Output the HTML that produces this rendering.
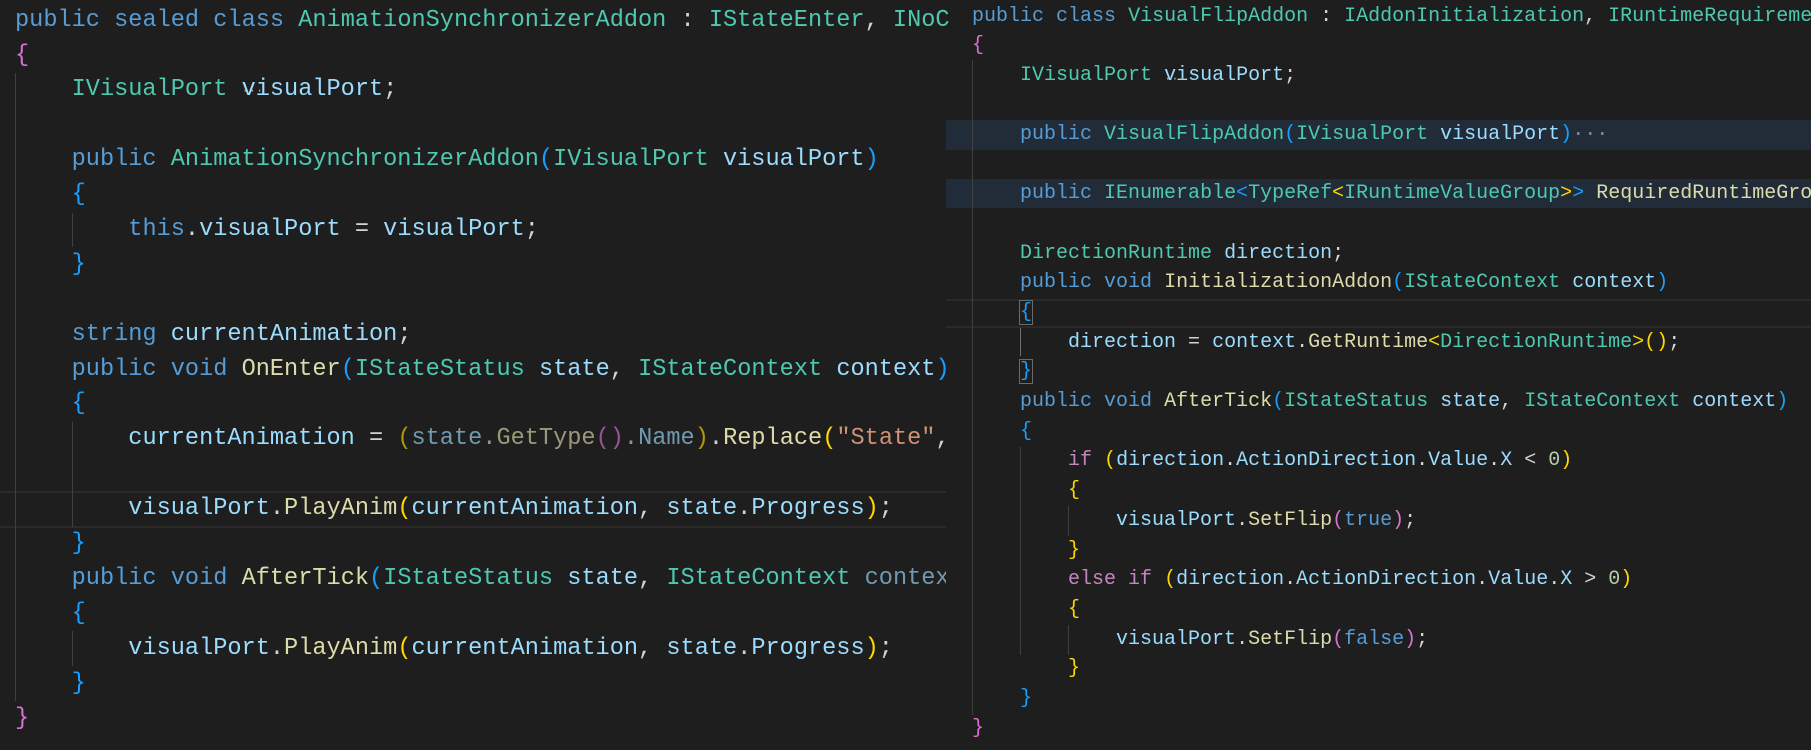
<!DOCTYPE html>
<html><head><meta charset="utf-8"><style>
html,body{margin:0;padding:0;background:#1e1e1e;width:1811px;height:750px;overflow:hidden}
.pane{position:absolute;top:0;height:750px;overflow:hidden;font-family:"Liberation Mono",monospace;color:#d4d4d4}
#L{left:0;width:946px;font-size:23.6px}
#L1{position:absolute;left:0;top:0;font-family:"Liberation Mono",monospace;color:#d4d4d4;font-size:23.6px}
#R{left:946px;width:865px;font-size:20px}
.ln{position:absolute;white-space:pre;left:0}
#L .ln,#L1 .ln{left:15px;height:35px;line-height:35px}
#R .ln{left:26px;height:30px;line-height:30px}
.k{color:#569cd6}.t{color:#4ec9b0}.v{color:#9cdcfe}.f{color:#dcdcaa}.s{color:#ce9178}
.p{color:#da70d6}.b{color:#179fff}.y{color:#ffd700}.c{color:#c586c0}.n{color:#b5cea8}
.dim{opacity:.65}
.g{position:absolute;width:1px;background:#404040}
.hl{position:absolute;background:#212c38}
.bx{outline:1px solid #6b6b6b}
.dots{position:relative}
.dots:after{content:"···";position:absolute;left:0;top:0.75em;font-size:12px;color:#aaa;line-height:12px}
.hr{position:absolute;height:2px;background:#2a2a2a}
</style></head><body>
<div id="L1"><div class="ln" style="top:3px"><span class="k">public</span> <span class="k">sealed</span> <span class="k">class</span> <span class="t">AnimationSynchronizerAddon</span> : <span class="t">IStateEnter</span>, <span class="t">INoC</span></div></div>
<div class="pane" id="L">
<div class="hr" style="left:0;width:946px;top:491px"></div>
<div class="hr" style="left:0;width:946px;top:526px"></div>
<div class="g" style="left:15px;top:73px;height:628px"></div>
<div class="g" style="left:72px;top:213px;height:34px"></div>
<div class="g" style="left:72px;top:422px;height:105px"></div>
<div class="g" style="left:72px;top:631px;height:35px"></div>
<div class="ln" style="top:38px"><span class="p">{</span></div>
<div class="ln" style="top:72px">    <span class="t">IVisualPort</span> <span class="v dots">visualPort</span>;</div>
<div class="ln" style="top:142px">    <span class="k">public</span> <span class="t">AnimationSynchronizerAddon</span><span class="b">(</span><span class="t">IVisualPort</span> <span class="v">visualPort</span><span class="b">)</span></div>
<div class="ln" style="top:177px">    <span class="b">{</span></div>
<div class="ln" style="top:212px">        <span class="k">this</span>.<span class="v">visualPort</span> = <span class="v">visualPort</span>;</div>
<div class="ln" style="top:247px">    <span class="b">}</span></div>
<div class="ln" style="top:317px">    <span class="k">string</span> <span class="v">currentAnimation</span>;</div>
<div class="ln" style="top:352px">    <span class="k">public</span> <span class="k">void</span> <span class="f">OnEnter</span><span class="b">(</span><span class="t">IStateStatus</span> <span class="v">state</span>, <span class="t">IStateContext</span> <span class="v">context</span><span class="b">)</span></div>
<div class="ln" style="top:386px">    <span class="b">{</span></div>
<div class="ln" style="top:421px">        <span class="v">currentAnimation</span> = <span class="y dim">(</span><span class="dim"><span class="v">state</span>.<span class="f">GetType</span><span class="p">()</span>.<span class="v">Name</span></span><span class="y dim">)</span>.<span class="f">Replace</span><span class="y">(</span><span class="s">"State"</span>,</div>
<div class="ln" style="top:491px">        <span class="v">visualPort</span>.<span class="f">PlayAnim</span><span class="y">(</span><span class="v">currentAnimation</span>, <span class="v">state</span>.<span class="v">Progress</span><span class="y">)</span>;</div>
<div class="ln" style="top:526px">    <span class="b">}</span></div>
<div class="ln" style="top:561px">    <span class="k">public</span> <span class="k">void</span> <span class="f">AfterTick</span><span class="b">(</span><span class="t">IStateStatus</span> <span class="v">state</span>, <span class="t">IStateContext</span> <span class="v dim">contex</span></div>
<div class="ln" style="top:596px">    <span class="b">{</span></div>
<div class="ln" style="top:631px">        <span class="v">visualPort</span>.<span class="f">PlayAnim</span><span class="y">(</span><span class="v">currentAnimation</span>, <span class="v">state</span>.<span class="v">Progress</span><span class="y">)</span>;</div>
<div class="ln" style="top:666px">    <span class="b">}</span></div>
<div class="ln" style="top:701px"><span class="p">}</span></div>
</div>
<div class="pane" id="R">
<div class="hl" style="left:0;width:865px;top:120px;height:30px"></div>
<div class="hl" style="left:0;width:865px;top:179px;height:29px"></div>
<div class="hr" style="left:0;width:865px;top:299px"></div>
<div class="hr" style="left:0;width:865px;top:326px"></div>
<div class="g" style="left:26px;top:60px;height:655px"></div>
<div class="g" style="left:74px;top:328px;height:28px;background:#707070"></div>
<div class="g" style="left:74px;top:447px;height:208px"></div>
<div class="g" style="left:122px;top:506px;height:30px"></div>
<div class="g" style="left:122px;top:625px;height:30px"></div>
<div class="ln" style="top:2px"><span class="k">public</span> <span class="k">class</span> <span class="t">VisualFlipAddon</span> : <span class="t">IAddonInitialization</span>, <span class="t">IRuntimeRequireme</span></div>
<div class="ln" style="top:31px"><span class="p">{</span></div>
<div class="ln" style="top:61px">    <span class="t">IVisualPort</span> <span class="v dots">visualPort</span>;</div>
<div class="ln" style="top:120px">    <span class="k">public</span> <span class="t">VisualFlipAddon</span><span class="b">(</span><span class="t">IVisualPort</span> <span class="v">visualPort</span><span class="b">)</span><span style="color:#8a8a8a">···</span></div>
<div class="ln" style="top:179px">    <span class="k">public</span> <span class="t">IEnumerable</span><span class="b">&lt;</span><span class="t">TypeRef</span><span class="y">&lt;</span><span class="t">IRuntimeValueGroup</span><span class="y">&gt;</span><span class="b">&gt;</span> <span class="f">RequiredRuntimeGro</span></div>
<div class="ln" style="top:239px">    <span class="t">DirectionRuntime</span> <span class="v">direction</span>;</div>
<div class="ln" style="top:268px">    <span class="k">public</span> <span class="k">void</span> <span class="f">InitializationAddon</span><span class="b">(</span><span class="t">IStateContext</span> <span class="v">context</span><span class="b">)</span></div>
<div class="ln" style="top:298px">    <span class="b bx">{</span></div>
<div class="ln" style="top:328px">        <span class="v">direction</span> = <span class="v">context</span>.<span class="f">GetRuntime</span><span class="y">&lt;</span><span class="t">DirectionRuntime</span><span class="y">&gt;()</span>;</div>
<div class="ln" style="top:357px">    <span class="b bx">}</span></div>
<div class="ln" style="top:387px">    <span class="k">public</span> <span class="k">void</span> <span class="f">AfterTick</span><span class="b">(</span><span class="t">IStateStatus</span> <span class="v">state</span>, <span class="t">IStateContext</span> <span class="v">context</span><span class="b">)</span></div>
<div class="ln" style="top:417px">    <span class="b">{</span></div>
<div class="ln" style="top:446px">        <span class="c">if</span> <span class="y">(</span><span class="v">direction</span>.<span class="v">ActionDirection</span>.<span class="v">Value</span>.<span class="v">X</span> &lt; <span class="n">0</span><span class="y">)</span></div>
<div class="ln" style="top:476px">        <span class="y">{</span></div>
<div class="ln" style="top:506px">            <span class="v">visualPort</span>.<span class="f">SetFlip</span><span class="p">(</span><span class="k">true</span><span class="p">)</span>;</div>
<div class="ln" style="top:536px">        <span class="y">}</span></div>
<div class="ln" style="top:565px">        <span class="c">else</span> <span class="c">if</span> <span class="y">(</span><span class="v">direction</span>.<span class="v">ActionDirection</span>.<span class="v">Value</span>.<span class="v">X</span> &gt; <span class="n">0</span><span class="y">)</span></div>
<div class="ln" style="top:595px">        <span class="y">{</span></div>
<div class="ln" style="top:625px">            <span class="v">visualPort</span>.<span class="f">SetFlip</span><span class="p">(</span><span class="k">false</span><span class="p">)</span>;</div>
<div class="ln" style="top:654px">        <span class="y">}</span></div>
<div class="ln" style="top:684px">    <span class="b">}</span></div>
<div class="ln" style="top:714px"><span class="p">}</span></div>
</div>
</body></html>
